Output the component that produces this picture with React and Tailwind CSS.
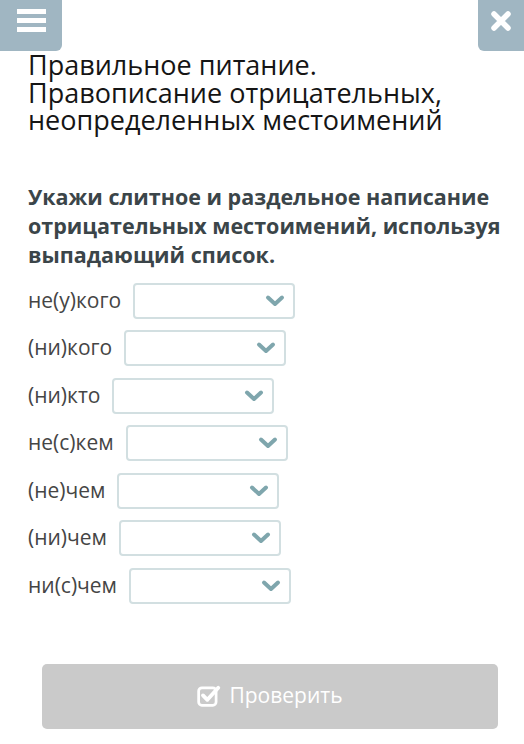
import React from "react";

const rows = ["не(у)кого", "(ни)кого", "(ни)кто", "не(с)кем", "(не)чем", "(ни)чем", "ни(с)чем"];

const Chevron = () => (
  <svg width="20" height="14" viewBox="0 0 20 14" fill="none">
    <path d="M3 3.5 L10 10 L17 3.5" stroke="#7fa6ad" strokeWidth="4" strokeLinecap="round" strokeLinejoin="round" />
  </svg>
);

const App = () => {
  return (
    <div className="relative w-[524px] h-[744px] bg-white overflow-hidden" style={{ fontFamily: '"Open Sans", "Noto Sans", sans-serif' }}>
      <div className="flex justify-between">
        <button className="w-[62px] h-[51px] bg-[#a0b6c2] rounded-br-[6px] flex flex-col items-center justify-center gap-[4px] pb-[10px]">
          <span className="block w-[29px] h-[5px] bg-white" />
          <span className="block w-[29px] h-[5px] bg-white" />
          <span className="block w-[29px] h-[5px] bg-white" />
        </button>
        <button className="w-[46px] h-[51px] bg-[#a0b6c2] rounded-bl-[6px] flex items-center justify-center pb-[10px]">
          <svg width="22" height="22" viewBox="0 0 22 22">
            <path d="M4 4 L18 18 M18 4 L4 18" stroke="white" strokeWidth="5.5" strokeLinecap="round" />
          </svg>
        </button>
      </div>

      <h1 className="mx-[28px] mt-[0px] text-[27px] leading-[27.5px] text-[#151515] font-normal">
        Правильное питание. Правописание отрицательных, неопределенных местоимений
      </h1>

      <p className="ml-[28px] mr-[14px] mt-[48px] text-[21.5px] leading-[29px] font-bold text-[#3b4549]">
        Укажи слитное и раздельное написание отрицательных местоимений, используя выпадающий список.
      </p>

      <div className="mx-[28px] mt-[14px] flex flex-col gap-[11.5px]">
        {rows.map((r) => (
          <div key={r} className="flex items-center h-[36px]">
            <span className="text-[21px] text-[#454545] mr-[12px]">{r}</span>
            <div className="w-[162px] h-[36px] border-2 border-[#d2dfe1] rounded-[4px] flex items-center justify-end pr-[8px]">
              <Chevron />
            </div>
          </div>
        ))}
      </div>

      <div className="mx-[42px] mt-[60px]">
        <button className="w-[456px] h-[65px] bg-[#cacaca] rounded-[5px] flex items-center justify-center gap-[8px] text-white text-[21px]">
          <svg width="24" height="22" viewBox="0 0 22 20" fill="none">
            <rect x="1.5" y="2.5" width="16" height="16" rx="3" stroke="white" strokeWidth="2.5" />
            <path d="M5.5 9.5 L9.5 13.5 L19.5 2.5" stroke="white" strokeWidth="3.5" strokeLinecap="round" strokeLinejoin="round" />
          </svg>
          Проверить
        </button>
      </div>
    </div>
  );
};

export default App;
